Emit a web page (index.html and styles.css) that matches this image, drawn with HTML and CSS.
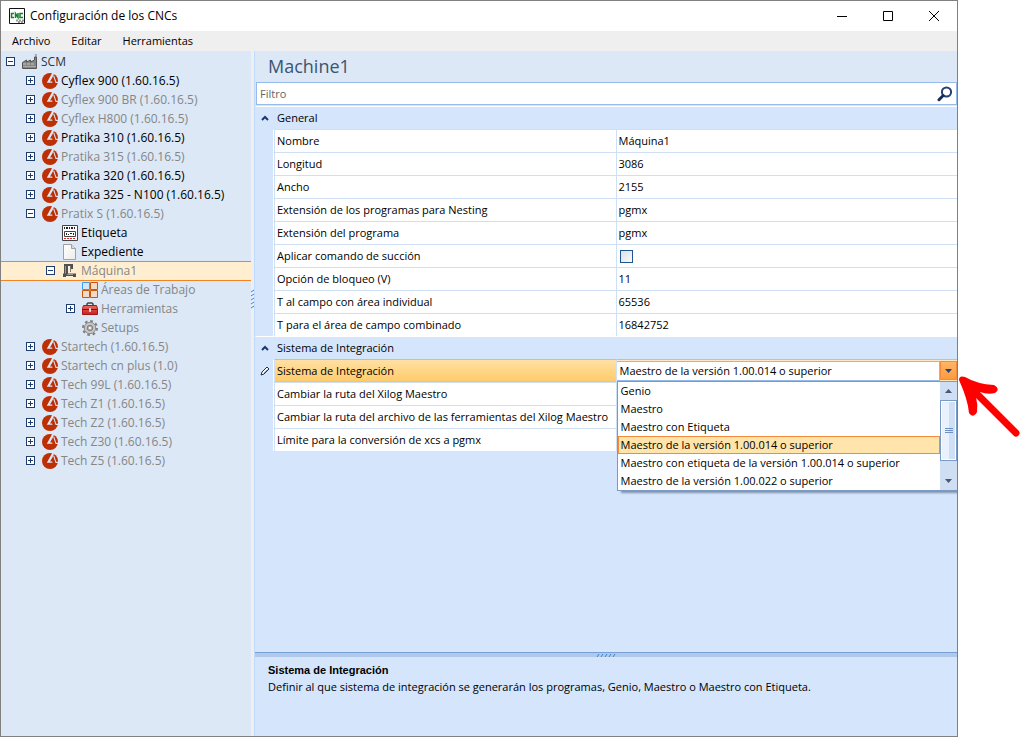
FILE: index.html
```html
<!DOCTYPE html>
<html lang="es">
<head>
<meta charset="utf-8">
<title>Configuración de los CNCs</title>
<link rel="stylesheet" href="styles.css">
</head>
<body>
<svg class="defs" aria-hidden="true">
  <defs>
    <linearGradient id="red" x1="0" y1="0" x2="0" y2="1"><stop offset="0" stop-color="#ee6a62"/><stop offset="1" stop-color="#c81e1e"/></linearGradient>
    <linearGradient id="paper" x1="0" y1="0" x2="1" y2="1"><stop offset="0" stop-color="#fff"/><stop offset="1" stop-color="#ececec"/></linearGradient>
  </defs>
  <symbol id="plus" viewBox="0 0 9 9"><rect x=".5" y=".5" width="8" height="8" fill="#fff" stroke="#1e3c6e"/><path d="M2 4.500h5M4.500 2v5" stroke="#1e3c6e"/></symbol>
  <symbol id="minus" viewBox="0 0 9 9"><rect x=".5" y=".5" width="8" height="8" fill="#fff" stroke="#1e3c6e"/><path d="M2 4.500h5" stroke="#1e3c6e"/></symbol>
  <symbol id="machine" viewBox="0 0 16 16"><circle cx="8" cy="8" r="8" fill="#bd2f05"/><path d="M10.200 0L4.800 9.800H10.500L9.500 6.300 11.500 2 12.500 0zM11.200 3L13.600 10H16V8.800H14.200L12.200 2.500z" fill="#dce8f6"/><path d="M9.800 5.500L8 8.600h2.300z" fill="#bd2f05"/></symbol>
  <symbol id="factory" viewBox="0 0 16 16"><path d="M.5 14.500V8.500L4.500 6v2L8.500 6v2L12.500 6V3h2v11.500z" fill="#858585" stroke="#555"/><path d="M1 10h12" stroke="#c4c4c4" stroke-dasharray="3 1"/><path d="M1 12.500h13" stroke="#aaa"/><path d="M12.500 0h2.500M13 2h2" stroke="#777"/></symbol>
  <symbol id="label" viewBox="0 0 16 16"><path d="M.5.5h15v15H.5z" fill="#fff" stroke="#444"/><path d="M2 3h12" stroke="#222" stroke-width="2" stroke-dasharray="1 1 2 1"/><path d="M2.500 6.500h11v5h-11z" fill="none" stroke="#444"/><path d="M4.500 8v2M6 9.500h1M8 8.500h2M11.500 8v2" stroke="#222"/><path d="M2 13.500h12" stroke="#e02020" stroke-dasharray="2 1"/></symbol>
  <symbol id="file" viewBox="0 0 16 16"><path d="M1.500.5h8l4 4v11h-12z" fill="url(#paper)" stroke="#a0a0a0"/><path d="M9.500.5v4h4" fill="#ddd" stroke="#a0a0a0"/></symbol>
  <symbol id="mill" viewBox="0 0 16 16"><path d="M2 1h9v5H9V3H6v8H2z" fill="#505050"/><path d="M3.500 3v8" stroke="#999"/><path d="M8.500 3v6" stroke="#777"/><path d="M1 10.500h13V14h-3v-1H4v1H1z" fill="#505050"/><path d="M5 11.500h6" stroke="#999"/></symbol>
  <symbol id="areas" viewBox="0 0 16 16"><g fill="#f3d9c8" stroke="#c8580e"><path d="M8.500.5h7v7h-7zM.5 8.500h7v7h-7zM8.500 8.500h7v7h-7z"/></g><path d="M.5.5h7v7h-7z" fill="#cfe8ff" stroke="#3a9dee"/></symbol>
  <symbol id="toolbox" viewBox="0 0 16 16"><path d="M5 5V3l1-1h4l1 1v2" fill="none" stroke="#444" stroke-width="1.500"/><path d="M1.500 4.500h13l1 3v6H.5v-6z" fill="url(#red)" stroke="#a51616"/><path d="M1 8.500h14" stroke="#7e1111"/><path d="M7.500 7.500h1v3h-1z" fill="#eee" stroke="#ddd"/></symbol>
  <symbol id="gear" viewBox="0 0 16 16"><circle cx="8" cy="8" r="7" fill="none" stroke="#808080" stroke-width="2" stroke-dasharray="2.750 2.750"/><circle cx="8" cy="8" r="5.700" fill="#c8c8c8" stroke="#8c8c8c"/><circle cx="8" cy="8" r="2.800" fill="#a8a8a8" stroke="#808080"/><circle cx="8" cy="8" r="1.300" fill="#eee"/></symbol>
  <symbol id="caret" viewBox="0 0 8 6"><path d="M1 5l3-3 3 3" fill="none" stroke="#1a3a6e" stroke-width="2"/></symbol>
</svg>

<main class="window">
  <header class="titlebar">
    <svg class="app-icon" viewBox="0 0 16 16"><path d="M.5.5h15v15H.5z" fill="#fff" stroke="#111"/><path d="M5 5.500H2.500v4H5M6.500 10V5.500l2.500 4V5M14 5.500h-3v4h3" fill="none" stroke="#16802c" stroke-width="1.500"/><path d="M7 12.500h8M9 14h6" stroke="#999" stroke-width="2" stroke-dasharray="2 1"/></svg>
    <h1 class="title">Configuración de los CNCs</h1>
    <button class="win-button" aria-label="Minimizar"><svg viewBox="0 0 12 12"><path d="M1 6.500h10" stroke="#000"/></svg></button>
    <button class="win-button" aria-label="Maximizar"><svg viewBox="0 0 12 12"><path d="M1.500 1.500h9v9h-9z" fill="none" stroke="#000"/></svg></button>
    <button class="win-button" aria-label="Cerrar"><svg viewBox="0 0 12 12"><path d="M1 1l10 10M11 1L1 11" stroke="#000"/></svg></button>
  </header>
  <nav class="menubar">
    <button class="menu">Archivo</button>
    <button class="menu">Editar</button>
    <button class="menu">Herramientas</button>
  </nav>

  <div class="workspace">
    <ul class="tree">
      <li class="node root"><svg class="toggle"><use href="#minus"/></svg><svg class="icon"><use href="#factory"/></svg>SCM</li>
      <li class="node l1 on"><svg class="toggle"><use href="#plus"/></svg><svg class="icon"><use href="#machine"/></svg>Cyflex 900 (1.60.16.5)</li>
      <li class="node l1"><svg class="toggle"><use href="#plus"/></svg><svg class="icon"><use href="#machine"/></svg>Cyflex 900 BR (1.60.16.5)</li>
      <li class="node l1"><svg class="toggle"><use href="#plus"/></svg><svg class="icon"><use href="#machine"/></svg>Cyflex H800 (1.60.16.5)</li>
      <li class="node l1 on"><svg class="toggle"><use href="#plus"/></svg><svg class="icon"><use href="#machine"/></svg>Pratika 310 (1.60.16.5)</li>
      <li class="node l1"><svg class="toggle"><use href="#plus"/></svg><svg class="icon"><use href="#machine"/></svg>Pratika 315 (1.60.16.5)</li>
      <li class="node l1 on"><svg class="toggle"><use href="#plus"/></svg><svg class="icon"><use href="#machine"/></svg>Pratika 320 (1.60.16.5)</li>
      <li class="node l1 on"><svg class="toggle"><use href="#plus"/></svg><svg class="icon"><use href="#machine"/></svg>Pratika 325 - N100 (1.60.16.5)</li>
      <li class="node l1"><svg class="toggle"><use href="#minus"/></svg><svg class="icon"><use href="#machine"/></svg>Pratix S (1.60.16.5)</li>
      <li class="node l2 on"><span class="toggle"></span><svg class="icon"><use href="#label"/></svg>Etiqueta</li>
      <li class="node l2 on"><span class="toggle"></span><svg class="icon"><use href="#file"/></svg>Expediente</li>
      <li class="node l2 selected"><svg class="toggle"><use href="#minus"/></svg><svg class="icon"><use href="#mill"/></svg>Máquina1</li>
      <li class="node l3"><span class="toggle"></span><svg class="icon"><use href="#areas"/></svg>Áreas de Trabajo</li>
      <li class="node l3"><svg class="toggle"><use href="#plus"/></svg><svg class="icon"><use href="#toolbox"/></svg>Herramientas</li>
      <li class="node l3"><span class="toggle"></span><svg class="icon"><use href="#gear"/></svg>Setups</li>
      <li class="node l1"><svg class="toggle"><use href="#plus"/></svg><svg class="icon"><use href="#machine"/></svg>Startech (1.60.16.5)</li>
      <li class="node l1"><svg class="toggle"><use href="#plus"/></svg><svg class="icon"><use href="#machine"/></svg>Startech cn plus (1.0)</li>
      <li class="node l1"><svg class="toggle"><use href="#plus"/></svg><svg class="icon"><use href="#machine"/></svg>Tech 99L (1.60.16.5)</li>
      <li class="node l1"><svg class="toggle"><use href="#plus"/></svg><svg class="icon"><use href="#machine"/></svg>Tech Z1 (1.60.16.5)</li>
      <li class="node l1"><svg class="toggle"><use href="#plus"/></svg><svg class="icon"><use href="#machine"/></svg>Tech Z2 (1.60.16.5)</li>
      <li class="node l1"><svg class="toggle"><use href="#plus"/></svg><svg class="icon"><use href="#machine"/></svg>Tech Z30 (1.60.16.5)</li>
      <li class="node l1"><svg class="toggle"><use href="#plus"/></svg><svg class="icon"><use href="#machine"/></svg>Tech Z5 (1.60.16.5)</li>
    </ul>
    <div class="splitter-v"><svg class="grip-v" viewBox="0 0 3 20"><path d="M0 3l3-2M0 7l3-2M0 11l3-2M0 15l3-2M0 19l3-2" stroke="#3f7fd0"/></svg></div>

    <section class="panel">
      <h2 class="heading">Machine1</h2>
      <div class="filter">
        <input class="filter-input" type="text" placeholder="Filtro" aria-label="Filtro">
        <button class="search" aria-label="Buscar"><svg viewBox="0 0 16 16"><circle cx="9.500" cy="6" r="4.600" fill="none" stroke="#263f74" stroke-width="2"/><path d="M6.200 9.500L2 13.700" stroke="#162c5c" stroke-width="3" stroke-linecap="round"/></svg></button>
      </div>

      <table class="grid">
        <colgroup><col class="gutter"><col><col></colgroup>
        <tbody>
          <tr class="category"><td><svg class="caret"><use href="#caret"/></svg></td><th colspan="2">General</th></tr>
          <tr><td></td><th>Nombre</th><td>Máquina1</td></tr>
          <tr><td></td><th>Longitud</th><td>3086</td></tr>
          <tr><td></td><th>Ancho</th><td>2155</td></tr>
          <tr><td></td><th>Extensión de los programas para Nesting</th><td>pgmx</td></tr>
          <tr><td></td><th>Extensión del programa</th><td>pgmx</td></tr>
          <tr><td></td><th><label for="suction">Aplicar comando de succión</label></th><td><input class="check" type="checkbox" id="suction"></td></tr>
          <tr><td></td><th>Opción de bloqueo (V)</th><td>11</td></tr>
          <tr><td></td><th>T al campo con área individual</th><td>65536</td></tr>
          <tr><td></td><th>T para el área de campo combinado</th><td>16842752</td></tr>
        </tbody>
        <tbody>
          <tr class="category"><td><svg class="caret"><use href="#caret"/></svg></td><th colspan="2">Sistema de Integración</th></tr>
          <tr class="active">
            <td><svg class="pencil" viewBox="0 0 10 10"><path d="M1 9l1-3 5-5 2 2-5 5z" fill="#fff" stroke="#1a3156"/><path d="M4 7l3.500-3.500" stroke="#8a96aa"/></svg></td>
            <th><label for="system">Sistema de Integración</label></th>
            <td class="editor">
              <div class="combo">
                <select class="select" id="system"><option>Maestro de la versión 1.00.014 o superior</option></select>
                <span class="drop"><svg viewBox="0 0 7 4"><path d="M0 0h7L3.500 4z" fill="#1c4484"/></svg></span>
                <div class="popup">
                  <ul class="options" role="listbox">
                    <li role="option">Genio</li>
                    <li role="option">Maestro</li>
                    <li role="option">Maestro con Etiqueta</li>
                    <li role="option" class="current" aria-selected="true">Maestro de la versión 1.00.014 o superior</li>
                    <li role="option">Maestro con etiqueta de la versión 1.00.014 o superior</li>
                    <li role="option">Maestro de la versión 1.00.022 o superior</li>
                  </ul>
                  <div class="scrollbar">
                    <span class="step"><svg viewBox="0 0 7 4"><path d="M0 4h7L3.500 0z" fill="#485873"/></svg></span>
                    <span class="thumb"><svg viewBox="0 0 8 6"><path d="M0 .5h8M0 2.500h8M0 4.500h8" stroke="#6d90c4"/></svg></span>
                    <span class="step"><svg viewBox="0 0 7 4"><path d="M0 0h7L3.500 4z" fill="#485873"/></svg></span>
                  </div>
                </div>
              </div>
            </td>
          </tr>
          <tr><td></td><th>Cambiar la ruta del Xilog Maestro</th><td></td></tr>
          <tr><td></td><th>Cambiar la ruta del archivo de las ferramientas del Xilog Maestro</th><td></td></tr>
          <tr><td></td><th>Límite para la conversión de xcs a pgmx</th><td></td></tr>
        </tbody>
      </table>

      <div class="splitter-h"><svg class="grip-h" viewBox="0 0 20 3"><path d="M1 3l2-3M5 3l2-3M9 3l2-3M13 3l2-3M17 3l2-3" stroke="#3f7fd0"/></svg></div>
      <footer class="description">
        <h3 class="desc-title">Sistema de Integración</h3>
        <p class="desc-text">Definir al que sistema de integración se generarán los programas, Genio, Maestro o Maestro con Etiqueta.</p>
      </footer>
    </section>
  </div>
  <svg class="pointer" viewBox="0 0 66 68" aria-hidden="true"><path d="M10 12L59 61" stroke="#fe0000" stroke-width="7" stroke-linecap="round"/><path d="M2 8Q2 3 8 5Q20 12 37 13Q44 17 38 21Q31 23 23 20L19 25Q21 33 20 40Q16 47 12 41Q11 28 2 8z" fill="#fe0000"/></svg>
</main>
</body>
</html>
```
FILE: styles.css
```css
* { box-sizing: border-box; }

body {
  margin: 0;
  background: #fff;
  color: #000;
  font: 11px/16px "Open Sans", "Noto Sans", sans-serif;
}

button, input, select { font: inherit; color: inherit; margin: 0; }
h1, h2, h3, p, ul { margin: 0; padding: 0; font-weight: normal; }
ul { list-style: none; }
svg { display: block; flex: none; }
.defs { position: absolute; width: 0; height: 0; }

.window {
  position: relative;
  display: flex;
  flex-direction: column;
  min-height: 100vh;
  margin-right: 73px;
  border: 1px solid #808080;
}

.titlebar { display: flex; align-items: center; height: 30px; padding-left: 8px; }
.app-icon { width: 16px; height: 16px; }
.title { flex: 1; padding-left: 5px; font-size: 12px; }
.win-button {
  display: grid;
  place-items: center;
  width: 46px;
  height: 28px;
  padding: 0;
  border: 0;
  background: none;
}
.win-button svg { width: 12px; height: 12px; }

.menubar { display: flex; gap: 21px; height: 20px; padding-left: 11px; background: #efefef; }
.menu { padding: 0; border: 0; background: none; }

.workspace { flex: 1; display: flex; background: #dce8f6; }

.tree { flex: none; width: 250px; padding-top: 1px; font-size: 12px; color: #868686; }
.node { display: flex; align-items: center; height: 19px; padding-left: 5px; white-space: nowrap; }
.node.root { color: #333; }
.node.on { color: #000; }
.l1 { padding-left: 25px; }
.l2 { padding-left: 45px; }
.l3 { padding-left: 65px; }
.toggle { width: 9px; height: 9px; margin-right: 7px; }
.icon { width: 16px; height: 16px; margin-right: 3px; }
.selected { background: #ffefd0; box-shadow: inset 0 1px #f58220, 0 1px #f58220; }

.splitter-v { display: flex; align-items: center; width: 3px; background: #efefef; }
.grip-v { width: 3px; height: 20px; margin-bottom: 190px; }

.panel {
  flex: 1;
  min-width: 0;
  display: flex;
  flex-direction: column;
  border-left: 1px solid #bfdbff;
  background: #d4e5fc;
}
.heading { height: 31px; padding-left: 13px; background: #dce8f6; color: #3b5470; font-size: 18px; line-height: 31px; }
.filter { display: flex; height: 23px; margin: 0 0 1px 1px; border: 1px solid #96baea; background: #fff; }
.filter-input { flex: 1; padding: 0 3px; border: 0; background: none; outline: 0; }
.filter-input::placeholder { color: #666; opacity: 1; }
.search { width: 22px; padding: 0 3px; border: 0; background: none; }
.search svg { width: 16px; height: 16px; }

.grid { width: 100%; table-layout: fixed; border-collapse: separate; border-spacing: 0; }
.gutter { width: 19px; }
.grid tr { height: 23px; }
.grid th, .grid td {
  padding: 0 2px;
  border-top: 1px solid #cfdff4;
  border-left: 1px solid #cfdff4;
  background: #fff;
  font-weight: normal;
  text-align: left;
  white-space: nowrap;
}
.grid td:first-child { padding: 0; border-color: transparent; border-right: 1px solid #fff; background: #d4e5fc; }
.grid .category th, .grid .category td { border-color: #fff transparent; background: #d4e5fc; }
.grid .category td { border-right: 0; }
.caret { width: 8px; height: 6px; margin-left: 5px; }
.pencil { width: 10px; height: 10px; margin-left: 4px; }
.check {
  display: block;
  width: 13px;
  height: 13px;
  margin-left: 1px;
  appearance: none;
  border: 1px solid #20568f;
  background: linear-gradient(135deg, #dcdfe8, #fafafa);
}
.grid .active th { border-top-color: #fbb55c; background: linear-gradient(#ffe0a3, #ffcb69); box-shadow: inset 0 -1px #ffbf62; }
.grid .editor { padding: 0; border-top-color: #fbb55c; vertical-align: top; }

.combo { position: relative; display: flex; height: 21px; padding-top: 1px; background: #ffe8bf; }
.select {
  flex: 1;
  min-width: 0;
  padding: 0 3px;
  appearance: none;
  border: 1px solid #96baea;
  border-left: 0;
  border-radius: 0;
  background: #fff;
  outline: 0;
}
.drop {
  display: grid;
  place-items: center;
  width: 17px;
  margin-bottom: 1px;
  border: 1px solid #f58a3c;
  background: linear-gradient(#ffb668, #ff9a3a);
}
.drop svg { width: 7px; height: 4px; }
.popup {
  position: absolute;
  top: 100%;
  left: 0;
  right: 0;
  z-index: 1;
  display: flex;
  border: 1px solid #7a9ac6;
  border-right: 0;
  background: #fff;
  box-shadow: 4px 2px 2px #8090a8;
  clip-path: inset(0 0 -6px 0);
}
.options { flex: 1; }
.options li { height: 18px; padding-left: 3px; line-height: 18px; }
.options .current { padding-left: 2px; border: 1px solid #f58a3c; background: #ffe5ab; line-height: 16px; }
.scrollbar { display: flex; flex-direction: column; width: 17px; background: #cfdef3; }
.step { display: grid; place-items: center; height: 18px; }
.step svg { width: 7px; height: 4px; }
.thumb {
  flex: 1;
  display: grid;
  place-items: center;
  margin-bottom: 11px;
  border: 1px solid #7a9ac6;
  background: linear-gradient(90deg, #e9f1fc 50%, #cfe0f6 50%);
  box-shadow: inset 0 0 0 1px #fff;
}
.thumb svg { width: 8px; height: 6px; }

.splitter-h {
  display: flex;
  justify-content: center;
  align-items: center;
  height: 5px;
  margin-top: auto;
  border-top: 1px solid #769fd6;
  background: #b0c9eb;
}
.grip-h { width: 20px; height: 3px; }
.description { height: 79px; padding: 5px 13px; }
.desc-title { font: bold 11px/16px "Liberation Sans", Arial, sans-serif; }
.desc-text { line-height: 18px; }

.pointer { position: absolute; top: 371px; left: 100%; width: 66px; height: 68px; }
```
